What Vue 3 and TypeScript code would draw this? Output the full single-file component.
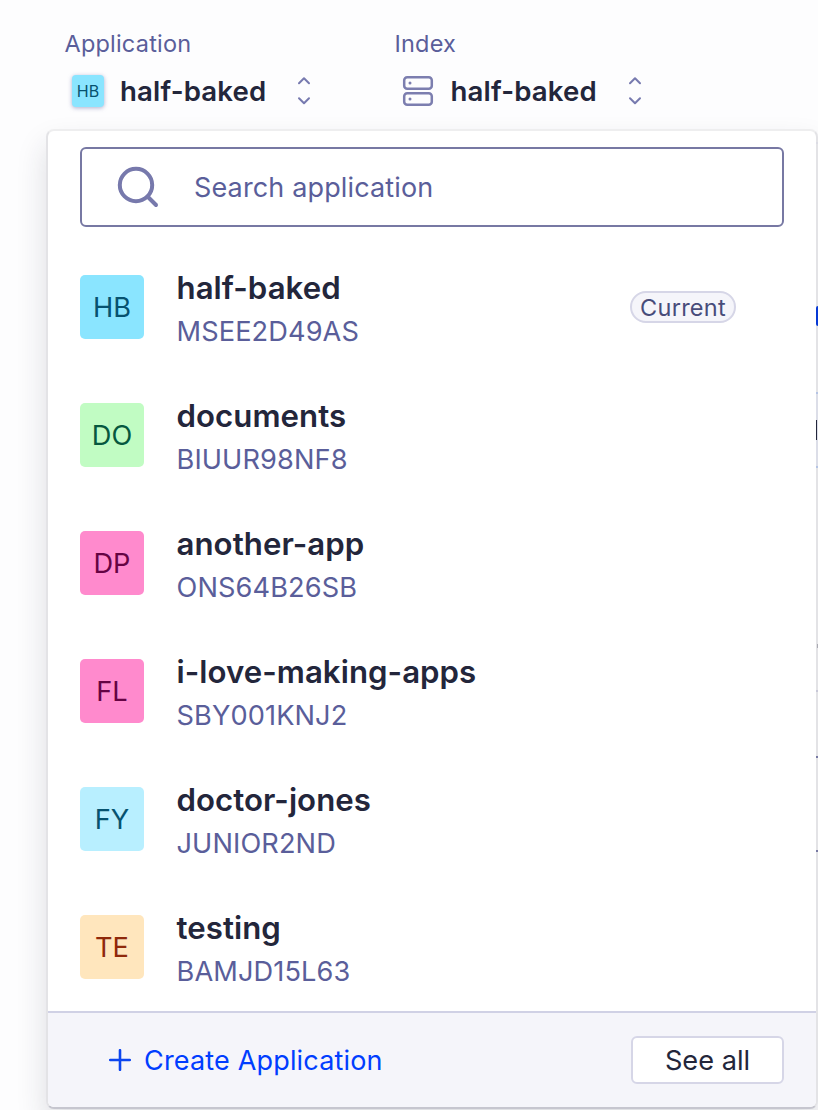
<script setup lang="ts">
interface App {
  initials: string
  name: string
  id: string
  tone: string
  current?: boolean
}

const apps: App[] = [
  { initials: 'HB', name: 'half-baked', id: 'MSEE2D49AS', tone: 'cyan', current: true },
  { initials: 'DO', name: 'documents', id: 'BIUUR98NF8', tone: 'green' },
  { initials: 'DP', name: 'another-app', id: 'ONS64B26SB', tone: 'pink' },
  { initials: 'FL', name: 'i-love-making-apps', id: 'SBY001KNJ2', tone: 'pink' },
  { initials: 'FY', name: 'doctor-jones', id: 'JUNIOR2ND', tone: 'sky' },
  { initials: 'TE', name: 'testing', id: 'BAMJD15L63', tone: 'sand' },
]
</script>

<template>
  <div class="page">
    <header class="selectors">
      <div class="selector">
        <span class="label">Application</span>
        <div class="value">
          <span class="mini cyan">HB</span>
          <strong>half-baked</strong>
          <svg class="chevrons" width="16" height="30" viewBox="0 0 16 30">
            <path d="M3 7.2 8 2.2 13 7.2M3 22.2 8 27.2 13 22.2" />
          </svg>
        </div>
      </div>
      <div class="selector index">
        <span class="label">Index</span>
        <div class="value">
          <svg class="server" width="32" height="32" viewBox="0 0 32 32">
            <rect x="2.2" y="2.2" width="27.6" height="11.6" rx="3" />
            <rect x="2.2" y="18.2" width="27.6" height="11.6" rx="3" />
            <circle cx="8" cy="8" r="1.5" />
            <circle cx="8" cy="24" r="1.5" />
          </svg>
          <strong>half-baked</strong>
          <svg class="chevrons" width="16" height="30" viewBox="0 0 16 30">
            <path d="M3 7.2 8 2.2 13 7.2M3 22.2 8 27.2 13 22.2" />
          </svg>
        </div>
      </div>
    </header>

    <section class="panel">
      <div class="search">
        <svg width="44" height="44" viewBox="0 0 44 44">
          <circle cx="20" cy="20" r="16.2" />
          <path d="m31.5 31.5 8.5 8.5" />
        </svg>
        <span>Search application</span>
      </div>
      <ul class="list">
        <li v-for="app in apps" :key="app.id">
          <span class="avatar" :class="app.tone">{{ app.initials }}</span>
          <div class="info">
            <div class="name">{{ app.name }}</div>
            <div class="id">{{ app.id }}</div>
          </div>
          <span v-if="app.current" class="badge">Current</span>
        </li>
      </ul>
      <footer>
        <a class="create">
          <svg width="22" height="22" viewBox="0 0 22 22"><path d="M11 1.2V20.8M1.2 11H20.8" /></svg>
          <span>Create Application</span>
        </a>
        <button class="see-all">See all</button>
      </footer>
    </section>

    <i class="edge rule"></i>
    <i class="edge link"></i>
    <i class="edge cell"></i>
    <i class="edge glyph"></i>
    <i class="edge mark"></i>
    <i class="edge faint"></i>
    <i class="edge line-a"></i>
    <i class="edge line-b"></i>
  </div>
</template>

<style>
body {
  margin: 0;
}
</style>

<style scoped>
.page {
  position: relative;
  box-sizing: border-box;
  width: 818px;
  height: 1110px;
  overflow: hidden;
  background: #fdfdfe;
  font-family: Inter, "Liberation Sans", sans-serif;
  color: #23263b;
}
.selectors {
  display: flex;
  height: 129px;
  box-sizing: border-box;
  padding: 30px 0 0 64.5px;
}
.selector {
  width: 330px;
}
.label {
  display: block;
  height: 28px;
  line-height: 28px;
  font-size: 23.5px;
  letter-spacing: 0.2px;
  color: #5a5e9a;
  white-space: nowrap;
}
.value {
  display: flex;
  align-items: center;
  height: 36px;
  margin-top: 15px;
  padding-left: 7.5px;
}
.value strong {
  width: 146px;
  margin-left: 16px;
  font-size: 27.6px;
  font-weight: 600;
  line-height: 37px;
  letter-spacing: 0.15px;
  white-space: nowrap;
}
.index .value strong {
  margin-left: 16.5px;
}
.mini {
  width: 32px;
  height: 32px;
  border-radius: 4px;
  font-size: 16px;
  line-height: 32px;
  text-align: center;
  box-shadow: 0 1px 4px #777aaf99;
}
.chevrons {
  margin-left: 30px;
  fill: none;
  stroke: #777aaf;
  stroke-width: 2;
  stroke-linecap: round;
  stroke-linejoin: round;
}
.server {
  fill: none;
  stroke: #7c7eaf;
  stroke-width: 2.5;
}
.server circle {
  fill: #7c7eaf;
  stroke: none;
}
.panel {
  display: flex;
  flex-direction: column;
  box-sizing: border-box;
  width: 772px;
  height: 980px;
  margin-left: 46px;
  border: 2px solid #e3e3e6;
  border-top-color: #eeeeef;
  border-bottom-color: #c6c6cf;
  border-radius: 8px;
  background: #fff;
  box-shadow: 0 16px 30px #23263b26;
  overflow: hidden;
}
.search {
  display: flex;
  align-items: center;
  box-sizing: border-box;
  height: 80px;
  margin: 16px 32px 0;
  padding-left: 34px;
  border: 2px solid #7778a3;
  border-radius: 6px;
  font-size: 27px;
  letter-spacing: 0.14px;
  color: #5a5e9a;
}
.search svg {
  fill: none;
  stroke: #7779ac;
  stroke-width: 4;
  stroke-linecap: round;
}
.search span {
  margin-left: 34px;
  padding-top: 1px;
}
.list {
  flex: 1;
  margin: 0;
  padding: 16px 32px 0;
  list-style: none;
}
.list li {
  display: flex;
  align-items: center;
  height: 128px;
}
.avatar {
  width: 64px;
  height: 64px;
  border-radius: 5px;
  font-size: 27.2px;
  line-height: 66px;
  text-align: center;
}
.cyan {
  background: #8ae5ff;
  color: #06526f;
}
.green {
  background: #c1fcc3;
  color: #06583f;
}
.pink {
  background: #ff8acd;
  color: #650343;
}
.sky {
  background: #b8efff;
  color: #06526f;
}
.sand {
  background: #ffe6bd;
  color: #8f290b;
}
.info {
  flex: 1;
  margin-left: 32.5px;
  padding-top: 4px;
}
.name {
  height: 45px;
  font-size: 31.2px;
  font-weight: 600;
  line-height: 42px;
  letter-spacing: 0.05px;
}
.id {
  height: 40px;
  font-size: 27.2px;
  line-height: 40px;
  letter-spacing: 0.1px;
  color: #5a5e9a;
}
.badge {
  box-sizing: border-box;
  width: 106px;
  height: 32px;
  margin-right: 48px;
  border: 2px solid #d6d6e7;
  border-radius: 16px;
  background: #f5f5fa;
  font-size: 23.5px;
  letter-spacing: 0.25px;
  line-height: 30px;
  text-align: center;
  color: #484c7a;
}
footer {
  display: flex;
  align-items: center;
  justify-content: space-between;
  box-sizing: border-box;
  height: 96px;
  padding: 0 32px 0 61px;
  border-top: 2px solid #d0d1e5;
  background: #f5f5fa;
}
.create {
  display: flex;
  align-items: center;
  gap: 13px;
  font-size: 27px;
  letter-spacing: 0.17px;
  color: #003dff;
}
.create span {
  padding-top: 1px;
}
.create svg {
  fill: none;
  stroke: #0b45ef;
  stroke-width: 2.6;
  stroke-linecap: round;
}
.see-all {
  box-sizing: border-box;
  width: 153px;
  height: 48px;
  padding: 1px 0 0;
  border: 2px solid #d6d6e7;
  border-radius: 6px;
  background: #fff;
  font-family: inherit;
  font-size: 27.2px;
  color: #23263b;
}
.edge {
  position: absolute;
  left: 816px;
  width: 2px;
}
.rule {
  top: 142px;
  height: 2px;
  background: #dcdce4;
}
.link {
  top: 306px;
  height: 20px;
  border-radius: 2px 0 0 2px;
  background: #0739d5;
}
.cell {
  top: 392px;
  height: 76px;
  box-sizing: border-box;
  border: solid #b5c4e4;
  border-width: 2px 0;
  background: #dcdee8;
}
.glyph {
  top: 420px;
  width: 1px;
  height: 20px;
  background: #23263b;
}
.mark {
  left: 817px;
  top: 644px;
  height: 4px;
  background: #aaaab2;
}
.faint {
  top: 690px;
  height: 2px;
  background: #c8c8d8;
}
.line-a {
  top: 756px;
  height: 2px;
  background: #7779a3;
}
.line-b {
  top: 850px;
  height: 2px;
  background: #7779a3;
}
</style>
